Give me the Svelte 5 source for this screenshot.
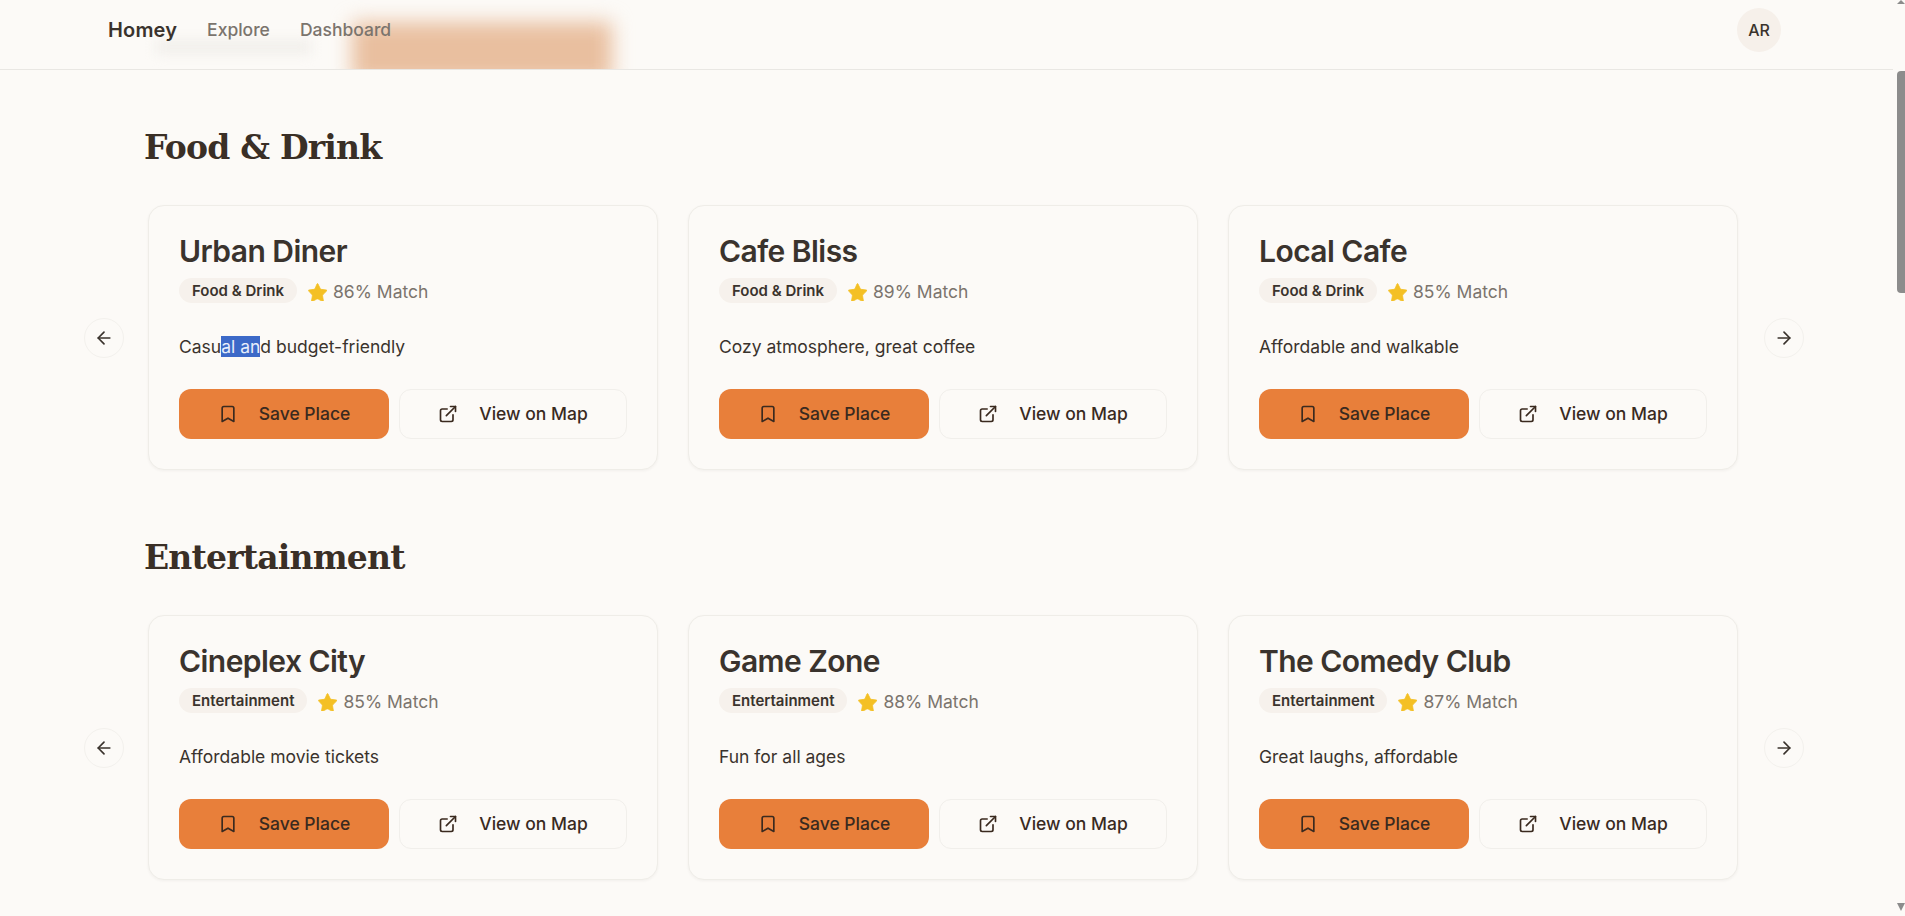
<script>
    const sections = [
        {
            title: "Food & Drink",
            places: [
                { name: "Urban Diner", match: 86, before: "Casu", selected: "al an", after: "d budget-friendly" },
                { name: "Cafe Bliss", match: 89, before: "Cozy atmosphere, great coffee" },
                { name: "Local Cafe", match: 85, before: "Affordable and walkable" },
            ],
        },
        {
            title: "Entertainment",
            places: [
                { name: "Cineplex City", match: 85, before: "Affordable movie tickets" },
                { name: "Game Zone", match: 88, before: "Fun for all ages" },
                { name: "The Comedy Club", match: 87, before: "Great laughs, affordable" },
            ],
        },
    ];
</script>

<div class="page">
    <nav class="nav">
        <div class="blur grey"></div>
        <div class="blur orange"></div>
        <div class="links">
            <span class="brand">Homey</span>
            <span class="link">Explore</span>
            <span class="link">Dashboard</span>
        </div>
        <div class="avatar">AR</div>
    </nav>

    <main class="main">
        {#each sections as section}
            <section class="section">
                <h2>{section.title}</h2>
                <div class="carousel">
                    <button class="arrow" aria-label="Previous">
                        <svg viewBox="0 0 24 24"><path d="m12 19-7-7 7-7" /><path d="M19 12H5" /></svg>
                    </button>
                    <div class="cards">
                        {#each section.places as place}
                            <article class="card">
                                <h3>{place.name}</h3>
                                <div class="meta">
                                    <span class="badge">{section.title}</span>
                                    <span class="match">
                                        <svg class="star" viewBox="0 0 24 24">
                                            <path d="M11.5 2.3a.6.6 0 0 1 1 0l2.9 5.9a2 2 0 0 0 1.5 1.1l6.500.9a.6.6 0 0 1 .3 1l-4.700 4.600a2 2 0 0 0-.6 1.800l1.100 6.500a.6.6 0 0 1-.8.6l-5.800-3.100a2 2 0 0 0-1.900 0l-5.800 3.100a.6.6 0 0 1-.8-.6l1.100-6.500a2 2 0 0 0-.6-1.800L.7 11.200a.6.6 0 0 1 .3-1l6.500-.9A2 2 0 0 0 9 8.200z" />
                                        </svg>
                                        {place.match}% Match
                                    </span>
                                </div>
                                <p class="desc">{place.before}{#if place.selected}<span class="selected">{place.selected}</span>{place.after}{/if}</p>
                                <div class="actions">
                                    <button class="btn primary">
                                        <svg viewBox="0 0 24 24"><path d="m19 21-7-4-7 4V5a2 2 0 0 1 2-2h10a2 2 0 0 1 2 2z" /></svg>
                                        Save Place
                                    </button>
                                    <button class="btn outline">
                                        <svg viewBox="0 0 24 24"><path d="M15 3h6v6" /><path d="M10 14 21 3" /><path d="M18 13v6a2 2 0 0 1-2 2H5a2 2 0 0 1-2-2V8a2 2 0 0 1 2-2h6" /></svg>
                                        View on Map
                                    </button>
                                </div>
                            </article>
                        {/each}
                    </div>
                    <button class="arrow" aria-label="Next">
                        <svg viewBox="0 0 24 24"><path d="M5 12h14" /><path d="m12 5 7 7-7 7" /></svg>
                    </button>
                </div>
            </section>
        {/each}
    </main>

    <div class="scrollbar">
        <div class="cap up"></div>
        <div class="thumb"></div>
        <div class="cap down"></div>
    </div>
</div>

<style>
    :global(body) {
        margin: 0;
        overflow: hidden;
        background: #fcfaf7;
    }
    .page {
        position: relative;
        height: 916px;
        padding-right: 12px;
        overflow: hidden;
        color: #3a332d;
        font-family: Inter, "Liberation Sans", sans-serif;
    }
    .nav {
        position: relative;
        overflow: hidden;
        height: 59px;
        padding: 0 112px 10px 108px;
        display: flex;
        align-items: center;
        justify-content: space-between;
        border-bottom: 1px solid #e9e7e3;
    }
    .blur {
        position: absolute;
    }
    .grey {
        left: 156px;
        top: 40px;
        width: 155px;
        height: 14px;
        background: #f1efeb;
        filter: blur(6px);
    }
    .orange {
        left: 352px;
        top: 22px;
        width: 260px;
        height: 60px;
        background: #e9bf9f;
        filter: blur(10px);
    }
    .links {
        position: relative;
        display: flex;
        align-items: center;
        gap: 30px;
    }
    .brand {
        font-size: 20px;
        font-weight: 600;
        letter-spacing: 0.15px;
    }
    .link {
        font-size: 17.5px;
        font-weight: 500;
        color: #7b746d;
    }
    .avatar {
        width: 44px;
        height: 44px;
        border-radius: 50%;
        display: flex;
        align-items: center;
        justify-content: center;
        background: #f6f0ea;
        font-size: 16px;
        font-weight: 500;
    }
    .main {
        padding: 0 0 0 84px;
    }
    .section {
        padding-top: 50px;
    }
    .section + .section {
        padding-top: 60px;
    }
    h2 {
        margin: 0 0 29px 60px;
        font-family: "DejaVu Serif", serif;
        font-size: 33px;
        line-height: 56px;
        font-weight: 700;
        letter-spacing: -0.8px;
        color: #3a2f26;
    }
    .carousel {
        width: 1720px;
        display: flex;
        align-items: center;
        justify-content: space-between;
    }
    .arrow {
        flex: none;
        width: 40px;
        height: 40px;
        padding: 0;
        display: flex;
        align-items: center;
        justify-content: center;
        border: 1px solid #f3f1ed;
        border-radius: 50%;
        background: #fcfaf7;
        color: #3a332d;
    }
    .arrow svg {
        width: 20px;
        height: 20px;
    }
    svg {
        fill: none;
        stroke: currentColor;
        stroke-width: 2;
        stroke-linecap: round;
        stroke-linejoin: round;
    }
    .cards {
        margin-left: 24px;
        margin-right: auto;
        display: grid;
        grid-template-columns: repeat(3, 510px);
        gap: 30px;
    }
    .card {
        padding: 30px;
        border: 1px solid #efede8;
        border-radius: 16px;
        background: #fcfaf7;
        box-shadow: 0 1px 3px rgba(60, 45, 30, 0.05);
    }
    h3 {
        margin: 0;
        font-size: 30px;
        line-height: 30px;
        font-weight: 600;
        letter-spacing: -0.55px;
    }
    .meta {
        margin-top: 12px;
        display: flex;
        align-items: center;
        gap: 11px;
    }
    .badge {
        height: 25px;
        padding: 0 13px;
        display: flex;
        align-items: center;
        border-radius: 13px;
        background: #f6f1ec;
        font-size: 15px;
        font-weight: 600;
    }
    .match {
        padding-top: 1px;
        display: flex;
        align-items: center;
        gap: 6px;
        font-size: 17.5px;
        color: #7b746d;
    }
    .star {
        width: 19px;
        height: 19px;
        fill: #f4c025;
        stroke: #f4c025;
        stroke-width: 1;
    }
    .desc {
        margin: 31px 0 30px;
        font-size: 17.5px;
        line-height: 25px;
    }
    .selected {
        background: #3c69c8;
        color: #e8eefb;
    }
    .actions {
        display: flex;
        gap: 10px;
    }
    .btn {
        flex: auto;
        height: 50px;
        padding: 0 0 1px;
        display: flex;
        align-items: center;
        justify-content: center;
        gap: 21px;
        border-radius: 12px;
        font-family: inherit;
        font-size: 17.5px;
        font-weight: 500;
        color: #3a2a1f;
    }
    .btn svg {
        width: 20px;
        height: 20px;
    }
    .primary {
        border: none;
        width: 210px;
        background: #e87f3a;
    }
    .outline {
        border: 1px solid #f1efeb;
        width: 228px;
        background: #fcfaf7;
    }
    .scrollbar {
        position: absolute;
        top: 0;
        right: 0;
        bottom: 0;
        width: 8px;
    }
    .thumb {
        position: absolute;
        top: 71px;
        left: 0;
        right: 0;
        height: 222px;
        border-radius: 4px 0 0 4px;
        background: #8c8c8c;
    }
    .cap {
        position: absolute;
        left: 0;
        width: 0;
        height: 0;
        border-left: 4px solid transparent;
        border-right: 4px solid transparent;
    }
    .up {
        top: 0;
        border-bottom: 4px solid #8c8c8c;
    }
    .down {
        top: 903px;
        border-top: 8px solid #8c8c8c;
    }
</style>
